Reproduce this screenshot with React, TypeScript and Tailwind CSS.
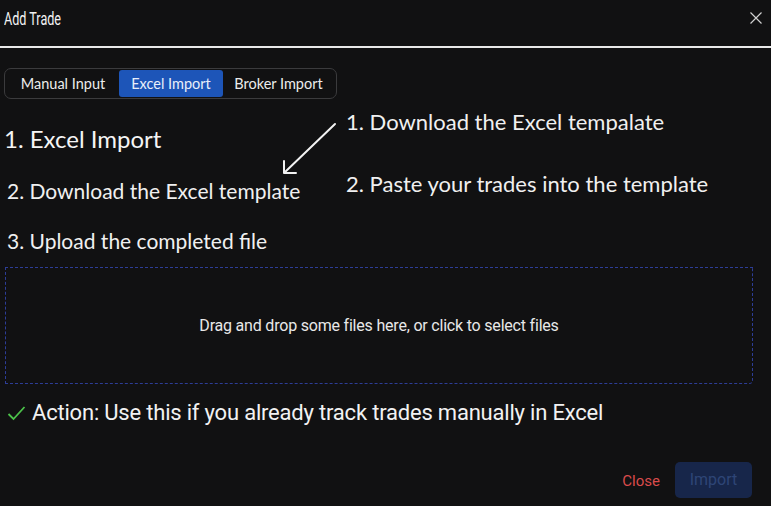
import React from "react";

export default function App() {
  return (
    <div className="w-[771px] h-[506px] bg-[#111112] text-white overflow-hidden relative" style={{ fontFamily: "Lato, 'Noto Sans', sans-serif" }}>
      <div className="h-[46px] flex items-start justify-between pl-[4px] pr-[8px] pt-[7px]">
        <div className="text-[18px] leading-[24px] text-[#f2f2f2] origin-left scale-x-[0.7] whitespace-nowrap" style={{ fontFamily: "Roboto, sans-serif" }}>Add Trade</div>
        <svg width="14" height="14" viewBox="0 0 14 14" className="text-[#d0d0d0] mt-[4px]">
          <path d="M1.5 1.5 L12.5 12.5 M12.5 1.5 L1.5 12.5" stroke="currentColor" strokeWidth="1.2" />
        </svg>
      </div>
      <div className="h-[2px] bg-[#e8e8e8]" />
      <div className="px-[4px] pt-[20px]">
        <div className="inline-flex items-center h-[31px] rounded-[7px] border border-[#3b3b3d] px-[2px] text-[14.5px]" style={{ fontFamily: "Lato, sans-serif" }}>
          <div className="w-[112px] text-center text-[#ececec]">Manual Input</div>
          <div className="w-[104px] h-[27px] flex items-center justify-center bg-[#1d55b8] rounded-[3px] text-[#e8eefa]">Excel Import</div>
          <div className="w-[111px] text-center text-[#ececec]">Broker Import</div>
        </div>
      </div>
      <div className="flex">
        <div className="w-[341px] pl-[4px]">
          <div className="text-[24px] leading-[30px] mt-[25px] text-[#f5f5f5]">1. Excel Import</div>
          <div className="text-[21px] leading-[26px] mt-[24px] pl-[3px] text-[#f0f0f0]">2. Download the Excel template</div>
          <div className="text-[21px] leading-[26px] mt-[24px] pl-[3px] text-[#f0f0f0]">3. Upload the completed file</div>
        </div>
        <div className="pl-[5px]">
          <div className="text-[22px] leading-[28px] mt-[9px] text-[#f0f0f0]">1. Download the Excel tempalate</div>
          <div className="text-[22px] leading-[28px] mt-[34px] text-[#f0f0f0]">2. Paste your trades into the template</div>
        </div>
      </div>
      <svg className="absolute left-[280px] top-[120px]" width="60" height="58" viewBox="0 0 60 58">
        <path d="M55 4 L4 53 M4 53 L4 41 M4 53 L16 53" stroke="#f2f2f2" strokeWidth="2" fill="none" strokeLinecap="round" />
      </svg>
      <div className="mx-[5px] mt-[13px] w-[748px] h-[117px] border border-dashed border-[#2d3d96] rounded-br-[4px] flex items-center justify-center">
        <span className="text-[16px] tracking-[-0.2px] text-[#e8e8e8]" style={{ fontFamily: "Roboto, sans-serif" }}>Drag and drop some files here, or click to select files</span>
      </div>
      <div className="flex items-center mt-[15px] pl-[7px] gap-[6px] h-[28px]">
        <svg width="19" height="16" viewBox="0 0 19 16">
          <path d="M1.5 9 L6.5 14 L17.5 2" stroke="#4cc24a" strokeWidth="1.8" fill="none" />
        </svg>
        <span className="text-[22px] leading-[28px] tracking-[-0.2px] text-[#f2f2f2]" style={{ fontFamily: "Roboto, sans-serif" }}>Action: Use this if you already track trades manually in Excel</span>
      </div>
      <div className="absolute right-[19px] top-[462px] flex items-center gap-[15px]">
        <span className="text-[15px] leading-[20px] mt-[2px] text-[#d94b4b]" style={{ fontFamily: "Roboto, sans-serif" }}>Close</span>
        <div className="w-[77px] h-[36px] rounded-[5px] bg-[#17264a] flex items-center justify-center text-[16px] text-[#2e4576]" style={{ fontFamily: "Roboto, sans-serif" }}>Import</div>
      </div>
    </div>
  );
}
